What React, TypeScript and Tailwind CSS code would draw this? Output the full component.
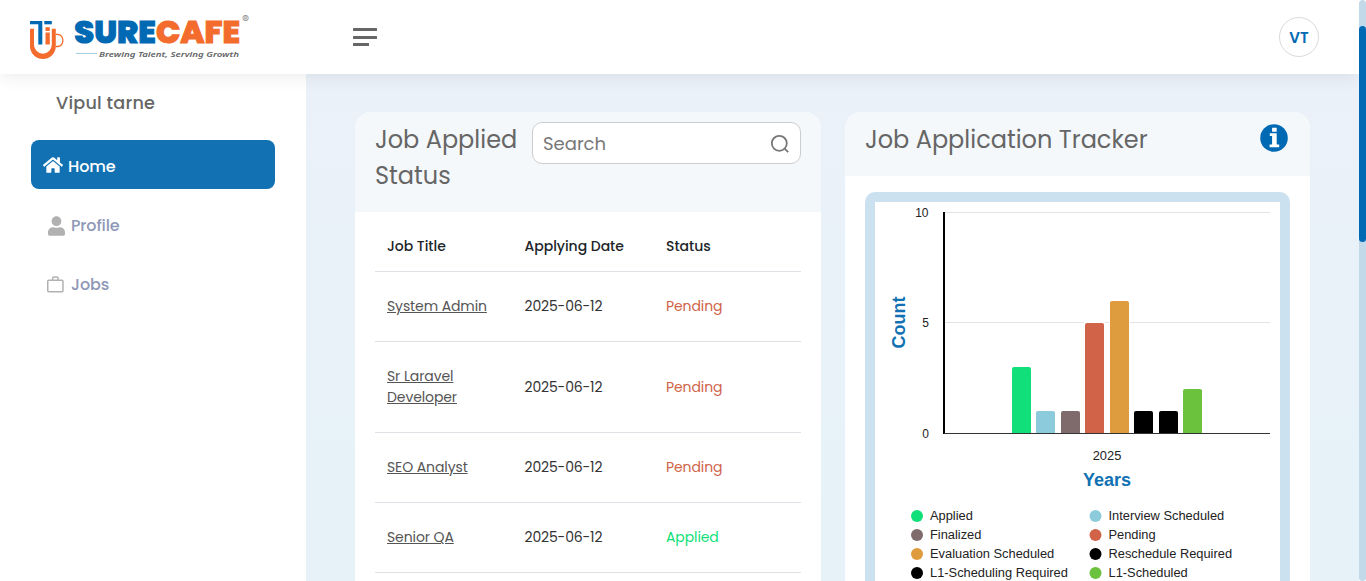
import { FaHome, FaUser } from "react-icons/fa";

const UI_FONT = "font-[Poppins,Inter,sans-serif]";

function Logo() {
  return (
    <svg width="228" height="54" viewBox="0 0 228 54" aria-label="Surecafe">
      <g fill="#0069b4">
        <path d="M6 11h12.300v23.500h-4V14.300H6z" />
        <rect x="20.300" y="11" width="7.500" height="3.300" />
      </g>
      <g fill="#f36c2d">
        <path d="M6 18.700h4v16a9.400 9.200 0 0 0 8.900 9 9.400 9.200 0 0 0 8.900-9v-16h4v16.500A13 13 0 0 1 18.900 49 13 13 0 0 1 6 35.200z" />
        <rect x="21.500" y="17.200" width="4.300" height="3.800" />
        <rect x="21.500" y="22.500" width="4.300" height="12" />
      </g>
      <path d="M32 24.300h1.800a5 6 0 0 1 0 12.200h-2" fill="none" stroke="#f36c2d" strokeWidth="1.300" />
      <g fontFamily="Poppins, Inter, sans-serif" fontSize="31.500" fontWeight="800" strokeWidth="1.100">
        <text x="50.300" y="33" textLength="81.500" lengthAdjust="spacingAndGlyphs" fill="#0069b4" stroke="#0069b4">SURE</text>
        <text x="132" y="33" textLength="84" lengthAdjust="spacingAndGlyphs" fill="#f36c2d" stroke="#f36c2d">CAFE</text>
      </g>
      <path d="M52 43.500h21" stroke="#90bfdf" strokeWidth=".8" />
      <text x="75" y="47" fontSize="7.800" fontWeight="600" fontStyle="italic" textLength="140" lengthAdjust="spacingAndGlyphs" fill="#626366" fontFamily="Noto Sans, sans-serif">Brewing Talent, Serving Growth</text>
      <text x="218" y="12.500" fontSize="10.500" fill="#8a8a8a" fontFamily="Inter, sans-serif">®</text>
    </svg>
  );
}

function InfoIcon() {
  return (
    <svg className="mt-[2px] size-7" viewBox="0 0 28 28">
      <circle cx="14" cy="14" r="13.800" fill="#0069b4" />
      <path
        d="M12.100 3.700h4.600v4h-4.600zM9.800 9.200h6.900v11.300h2.500v2.800H9.600v-2.800h2.500V12H9.800z"
        fill="#fff"
      />
    </svg>
  );
}

function Header() {
  return (
    <header className="relative z-10 flex h-[74px] shrink-0 items-center bg-white pr-10 pl-6 shadow-[0_4px_16px_rgba(0,0,0,0.07)]">
      <Logo />
      <svg className="ml-[101px]" width="24" height="20" viewBox="0 0 24 20" fill="#666">
        <rect y="1" width="24" height="3" rx=".5" />
        <rect y="9" width="24" height="3" rx=".5" />
        <rect y="16" width="16" height="3" rx=".5" />
      </svg>
      <div className="ml-auto flex size-10 items-center justify-center rounded-full border border-[#d9dadd] pt-[2px] text-[15px] font-semibold text-[#0069b4]">
        VT
      </div>
    </header>
  );
}

function Sidebar() {
  return (
    <aside className="w-[306px] shrink-0 bg-white px-[31px] pt-[15px]">
      <p className="pl-[25px] text-[17.6px] leading-7 font-medium tracking-[0.2px] text-[#666]">Vipul tarne</p>
      <nav className="mt-[23px] text-base font-medium text-[#8f98b7]">
        <a className="flex h-[49px] items-center gap-[5px] rounded-lg bg-[#1171b2] pt-[4px] pl-3 text-white">
          <FaHome className="mb-[4px] size-5" />
          <span className="tracking-[-0.1px]">Home</span>
        </a>
        <a className="mt-3 flex h-[49px] items-center gap-[6px] pl-[17px]">
          <FaUser className="h-5 w-[17px] text-[#b1b1b1]" />
          <span className="tracking-[-0.15px]">Profile</span>
        </a>
        <a className="mt-[10px] flex h-[49px] items-center gap-[7px] pl-4">
          <svg width="17" height="17" viewBox="0 0 17 17" fill="none" stroke="#b1b1b1" strokeWidth="1.500">
            <rect x=".75" y="4.200" width="15.200" height="11.600" rx="1" />
            <path d="M5.700 4V2q0-1 1-1H10q1 0 1 1v2" />
          </svg>
          <span className="tracking-[-0.1px]">Jobs</span>
        </a>
      </nav>
    </aside>
  );
}

const jobs = [
  { title: "System Admin", date: "2025-06-12", status: "Pending", height: "h-[70px]" },
  { title: "Sr Laravel Developer", date: "2025-06-12", status: "Pending", height: "h-[91px]" },
  { title: "SEO Analyst", date: "2025-06-12", status: "Pending", height: "h-[70px]" },
  { title: "Senior QA", date: "2025-06-12", status: "Applied", height: "h-[70px]" },
];

const GRID = "grid grid-cols-[137.5px_141.5px_1fr] items-center border-b border-[#dee2e6] [&>*]:px-3";

function JobStatusCard() {
  return (
    <section className="h-[600px] w-[466px] shrink-0 overflow-hidden rounded-t-2xl bg-white">
      <div className="flex h-[100px] items-start bg-[#f4f8fb] px-5 pt-[10px]">
        <h2 className="w-[157px] shrink-0 text-2xl leading-9 text-[#666]">Job Applied Status</h2>
        <div className="flex h-[42px] flex-1 items-center justify-between rounded-[10px] border border-[#ccc] bg-white px-[10px] text-lg text-[#777]">
          <span className="pt-[2px]">Search</span>
          <svg className="mt-px" width="20" height="20" viewBox="0 0 20 20" fill="none" stroke="#777" strokeWidth="1.800">
            <circle cx="9.300" cy="9.300" r="7.500" />
            <path d="m14.700 14.700 3.500 3.500" />
          </svg>
        </div>
      </div>
      <div className="px-5 text-sm leading-[21px] tracking-[-0.1px]">
        <div className={`${GRID} h-[60px] pt-[9px] font-medium tracking-[-0.03px] text-[#212529]`}>
          <span>Job Title</span>
          <span>Applying Date</span>
          <span>Status</span>
        </div>
        {jobs.map((job) => (
          <div key={job.title} className={`${GRID} ${job.height}`}>
            <a className="text-[#555] underline">{job.title}</a>
            <span className="tracking-[-0.15px] text-[#333]">{job.date}</span>
            <span className={job.status === "Applied" ? "text-[#11df79]" : "text-[#d06348]"}>{job.status}</span>
          </div>
        ))}
      </div>
    </section>
  );
}

const series = [
  { label: "Applied", value: 3, color: "#11df79", x: 137 },
  { label: "Interview Scheduled", value: 1, color: "#8ccbdc", x: 161 },
  { label: "Finalized", value: 1, color: "#7f6b6b", x: 186 },
  { label: "Pending", value: 5, color: "#d06348", x: 210 },
  { label: "Evaluation Scheduled", value: 6, color: "#de9c3e", x: 235 },
  { label: "Reschedule Required", value: 1, color: "#000000", x: 259 },
  { label: "L1-Scheduling Required", value: 1, color: "#000000", x: 284 },
  { label: "L1-Scheduled", value: 2, color: "#6bc23c", x: 308 },
];

function Chart() {
  return (
    <svg width="405" height="400" viewBox="0 0 405 400" fontFamily="Liberation Sans, Arial, sans-serif">
      <g fill="#e3e3e3">
        <rect x="70" y="10" width="325" height="1" />
        <rect x="70" y="120" width="325" height="1" />
      </g>
      {series.map((s) => {
        const top = 231 - s.value * 22;
        return (
          <g key={s.label}>
            <rect x={s.x - 1} y={top - 1} width="21" height={232 - top} fill="#fff" />
            <path fill={s.color} d={`M${s.x} 231V${top + 2}q0-2 2-2h15q2 0 2 2V231z`} />
          </g>
        );
      })}
      <rect x="68" y="10" width="2" height="222" />
      <rect x="69" y="231" width="326" height="1" fill="#333" />
      <g fontSize="12" fill="#222">
        <text x="53.500" y="15" textAnchor="end">10</text>
        <text x="54" y="125" textAnchor="end">5</text>
        <text x="54" y="236" textAnchor="end">0</text>
        <text x="232" y="258" textAnchor="middle" fontSize="12.850">2025</text>
      </g>
      <g fontSize="18" fontWeight="700" fill="#1171b2" textAnchor="middle">
        <text x="232" y="284">Years</text>
        <text transform="translate(30 120.500) rotate(-90)">Count</text>
      </g>
      {series.map((s, i) => {
        const x = i % 2 ? 220.5 : 42;
        const y = 314 + Math.floor(i / 2) * 19;
        return (
          <g key={s.label}>
            <circle cx={x} cy={y} r="6" fill={s.color} />
            <text x={x + 13} y={y + 4} fontSize="12.850" fill="#222">{s.label}</text>
          </g>
        );
      })}
    </svg>
  );
}

function TrackerCard() {
  return (
    <section className="h-[600px] w-[465px] shrink-0 overflow-hidden rounded-t-2xl bg-white">
      <div className="flex h-16 items-start justify-between bg-[#f4f8fb] pt-[10px] pr-[22px] pl-5">
        <h2 className="text-2xl leading-9 text-[#666]">Job Application Tracker</h2>
        <InfoIcon />
      </div>
      <div className="mx-5 mt-4 rounded-[10px] bg-[#cce1ef] p-[10px]">
        <div className="bg-white">
          <Chart />
        </div>
      </div>
    </section>
  );
}

export default function App() {
  return (
    <div className={`flex h-[581px] w-[1366px] overflow-hidden ${UI_FONT}`}>
      <div className="flex h-full w-[1359px] flex-col overflow-hidden">
        <Header />
        <div className="flex min-h-0 flex-1">
          <Sidebar />
          <main className="flex min-w-0 flex-1 items-start gap-6 overflow-hidden bg-linear-to-b from-[#ebf1f9] to-[#e6f2f8] pt-[38px] pl-[49px]">
            <JobStatusCard />
            <TrackerCard />
          </main>
        </div>
      </div>
      <div className="h-full w-[7px] rounded-full bg-[#c2d9e9] pt-[26px]">
        <div className="h-[216px] rounded-full bg-[#0069b4]" />
      </div>
    </div>
  );
}
